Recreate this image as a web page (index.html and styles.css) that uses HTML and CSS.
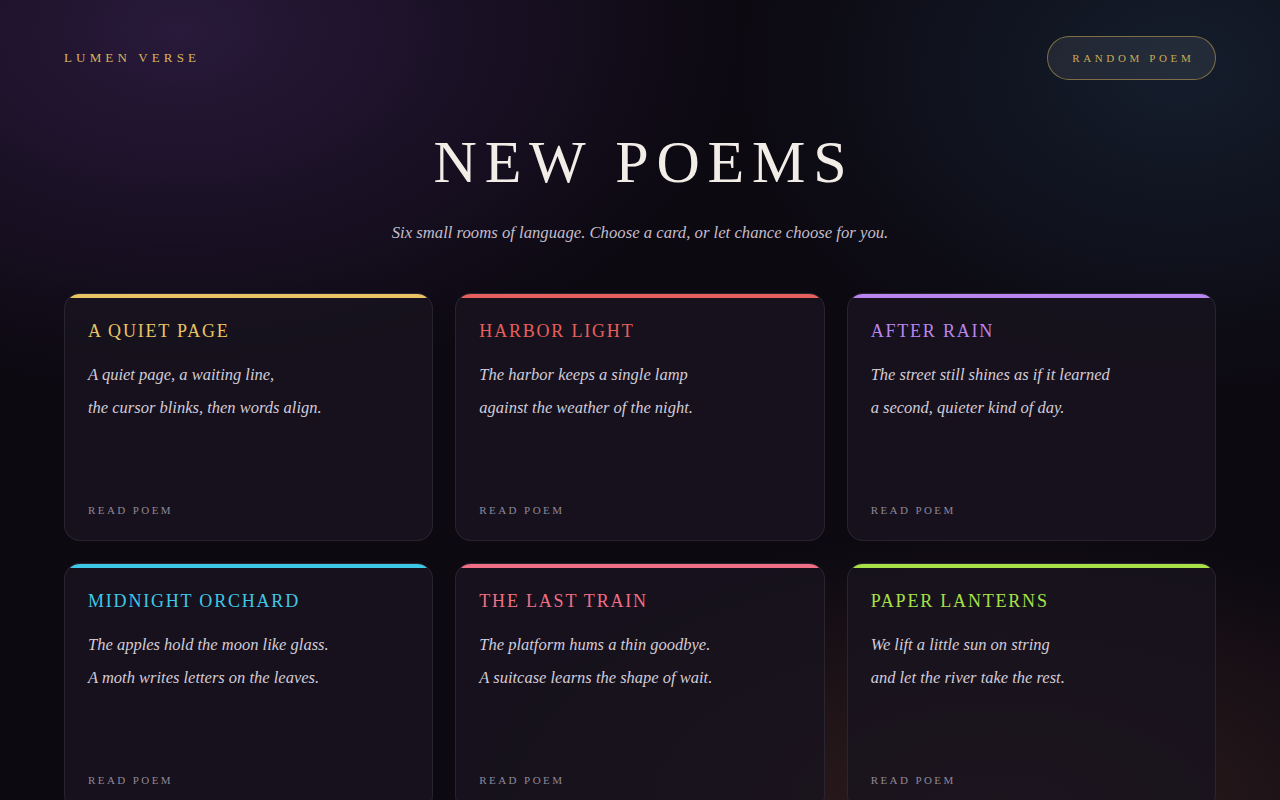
FILE: index.html
```html
<!DOCTYPE html>
<html lang="en">
<head>
    <meta charset="UTF-8">
    <meta name="viewport" content="width=device-width, initial-scale=1.0">
    <title>Lumen Verse</title>
    <link rel="stylesheet" href="styles.css">
</head>
<body>

<div class="page">
    <header class="header">
        <div class="logo">Lumen Verse</div>
        <button class="random-button">Random Poem</button>
    </header>

    <section class="hero">
        <h1>New Poems</h1>
        <p class="subtitle">Six small rooms of language. Choose a card, or let chance choose for you.</p>
    </section>

    <div class="grid">
        <div class="card amber">
            <h2>A Quiet Page</h2>
            <p class="poem">A quiet page, a waiting line,<br>the cursor blinks, then words align.</p>
            <a href="#" class="read">Read Poem</a>
        </div>
        <div class="card red">
            <h2>Harbor Light</h2>
            <p class="poem">The harbor keeps a single lamp<br>against the weather of the night.</p>
            <a href="#" class="read">Read Poem</a>
        </div>
        <div class="card violet">
            <h2>After Rain</h2>
            <p class="poem">The street still shines as if it learned<br>a second, quieter kind of day.</p>
            <a href="#" class="read">Read Poem</a>
        </div>
        <div class="card cyan">
            <h2>Midnight Orchard</h2>
            <p class="poem">The apples hold the moon like glass.<br>A moth writes letters on the leaves.</p>
            <a href="#" class="read">Read Poem</a>
        </div>
        <div class="card rose">
            <h2>The Last Train</h2>
            <p class="poem">The platform hums a thin goodbye.<br>A suitcase learns the shape of wait.</p>
            <a href="#" class="read">Read Poem</a>
        </div>
        <div class="card lime">
            <h2>Paper Lanterns</h2>
            <p class="poem">We lift a little sun on string<br>and let the river take the rest.</p>
            <a href="#" class="read">Read Poem</a>
        </div>
    </div>
</div>

</body>
</html>
```

FILE: styles.css
```css
html, body {
    margin: 0;
    height: 100%;
}

body {
    background-color: #0c0911;
    background-image:
        radial-gradient(ellipse 560px 360px at 180px 30px, rgba(64, 38, 92, 0.55), transparent 100%),
        radial-gradient(ellipse 440px 320px at 1180px 70px, rgba(28, 48, 70, 0.5), transparent 100%),
        radial-gradient(ellipse 560px 280px at 1000px 810px, rgba(78, 46, 40, 0.55), transparent 100%);
    background-repeat: no-repeat;
    font-family: "Liberation Serif", "DejaVu Serif", serif;
    color: #ece6ea;
    overflow: hidden;
}

.page {
    padding: 36px 64px 0;
}

.header {
    display: flex;
    justify-content: space-between;
    align-items: center;
}

.logo {
    font-size: 13px;
    letter-spacing: 0.32em;
    text-transform: uppercase;
    color: #d8b45c;
}

.random-button {
    height: 44px;
    width: 169px;
    border-radius: 22px;
    border: 1px solid rgba(200, 168, 82, 0.55);
    background-color: rgba(255, 255, 255, 0.07);
    color: #c9a955;
    font-family: inherit;
    font-size: 11px;
    letter-spacing: 0.33em;
    text-indent: 0.33em;
    text-transform: uppercase;
    cursor: pointer;
}

.hero {
    text-align: center;
}

.hero h1 {
    margin: 52px 0 0;
    font-size: 60px;
    line-height: 60px;
    font-weight: normal;
    letter-spacing: 0.13em;
    text-indent: 0.13em;
    text-transform: uppercase;
    color: #f3ede8;
}

.subtitle {
    margin: 28px 0 0;
    font-size: 16.7px;
    line-height: 26px;
    font-style: italic;
    color: #c4bccb;
}

.grid {
    display: grid;
    grid-template-columns: repeat(3, 1fr);
    gap: 22px 22px;
    margin-top: 47px;
}

.card {
    position: relative;
    overflow: hidden;
    box-sizing: border-box;
    min-height: 248px;
    display: flex;
    flex-direction: column;
    padding: 25px 23px 22px;
    background-color: rgba(24, 19, 31, 0.82);
    border: 1px solid rgba(255, 255, 255, 0.08);
    border-radius: 16px;
}

.card::before {
    content: "";
    position: absolute;
    left: 0;
    right: 0;
    top: 0;
    height: 4px;
    background-color: var(--accent);
}

.card h2 {
    margin: 0;
    font-size: 18px;
    line-height: 24px;
    font-weight: normal;
    letter-spacing: 0.1em;
    text-transform: uppercase;
    color: var(--accent);
}

.poem {
    margin: 15px 0 0;
    font-size: 16.5px;
    line-height: 33px;
    font-style: italic;
    color: #d3cbd8;
}

.read {
    margin-top: auto;
    font-size: 11px;
    line-height: 16px;
    letter-spacing: 0.22em;
    text-transform: uppercase;
    text-decoration: none;
    color: #8f8898;
}

.amber { --accent: #eac464; }
.red { --accent: #e6605d; }
.violet { --accent: #b985ee; }
.cyan { --accent: #3fc8e6; }
.rose { --accent: #ef6f87; }
.lime { --accent: #a8e048; }
```
